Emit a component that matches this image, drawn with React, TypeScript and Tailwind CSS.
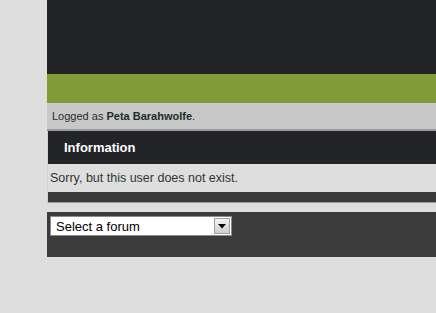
export default function App() {
  return (
    <div className="min-h-[313px] w-full bg-[#dedede] font-['Liberation_Sans',Arial,sans-serif]">
      <div className="ml-[47px]">
        {/* header */}
        <div className="h-[74px] bg-[#222427]" />
        <div className="h-[29px] bg-[#809b38]" />

        {/* logged bar */}
        <div className="flex h-[28px] items-center border-b-2 border-[#9c9c9c] bg-[#c8c8c8] pl-[5px] pt-[1px] text-[11px] text-[#2a2a2a]">
          <span>
            Logged as <b className="text-[#1e2b2b]">Peta Barahwolfe</b>.
          </span>
        </div>

        {/* information box */}
        <div className="border-l border-[#cfcfcf]">
          <div className="flex h-[33px] items-center bg-[#222427] pl-[16px] text-[13px] font-bold text-white">
            Information
          </div>
          <div className="flex h-[28px] items-center bg-[#dedede] pl-[2px] text-[12.5px] text-[#333]">
            Sorry, but this user does not exist.
          </div>
          <div className="h-[11px] border-b border-[#9a9a9a] bg-[#3a3a3a]" />
        </div>

        <div className="h-[9px]" />

        {/* footer */}
        <div className="h-[45px] bg-[#3b3b3b] pl-[3px] pt-[4px]">
          <div className="flex h-[20px] w-[182px] items-center border border-[#8a8a8a] bg-white">
            <span className="flex-1 pl-[5px] text-[13px] leading-none text-black">Select a forum</span>
            <div className="mr-[1px] flex h-[16px] w-[16px] items-center justify-center border border-[#a0a0a0] bg-gradient-to-b from-[#f4f4f4] to-[#cfcfcf]">
              <svg width="8" height="5" viewBox="0 0 8 5">
                <path d="M0 0 L8 0 L4 4.5 Z" fill="#000" />
              </svg>
            </div>
          </div>
        </div>
      </div>
    </div>
  )
}
